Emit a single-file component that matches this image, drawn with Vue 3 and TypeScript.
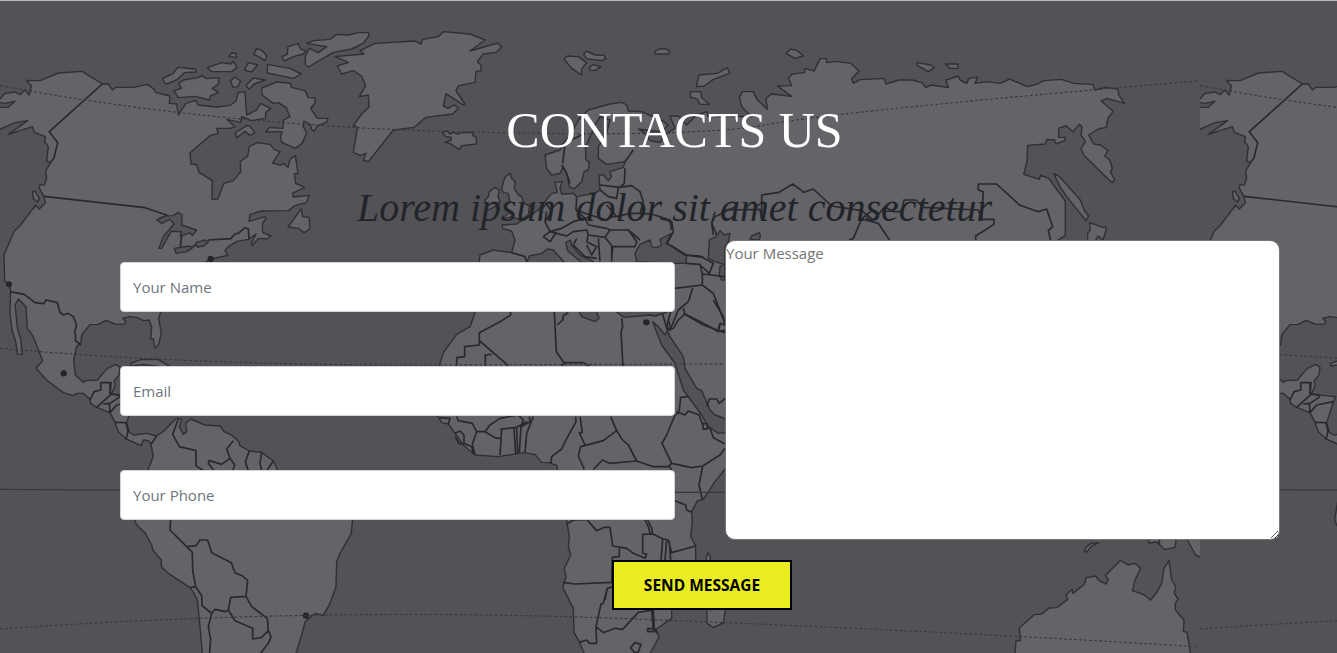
<script setup lang="ts">
import { reactive } from 'vue'

interface Shape { x?: number; y?: number; d: string }

const form = reactive({ name: '', email: '', phone: '', message: '' })
const fields: { key: 'name' | 'email' | 'phone'; label: string }[] = [
  { key: 'name', label: 'Your Name' },
  { key: 'email', label: 'Email' },
  { key: 'phone', label: 'Your Phone' },
]

// Map units are a third of a pixel; one map tile is 3600 units wide.
const americaLand: Shape[] = [
  { d: 'M-20 297L0 297 15 280 45 276 60 284 75 270 88 285 94 258 80 241 120 242 175 219 247 214 307 252 325 252 338 270 347 262 400 262 443 253 462 268 466 277 510 288 508 310 530 312 535 345 558 310 588 301 594 315 650 321 690 316 708 303 715 277 735 275 740 345 770 330 782 310 812 326 797 337 797 355 755 362 725 350 722 367 680 358 705 380 690 385 650 385 655 400 630 407 570 458 573 492 590 494 598 518 637 542 636 598 653 598 672 550 700 542 722 515 721 485 743 468 748 440 772 428 810 433 822 448 840 455 818 489 842 496 850 490 864 502 870 478 886 467 894 520 883 522 887 550 914 562 877 580 880 591 928 586 920 607 885 617 865 632 785 633 750 643 747 664 795 650 798 655 787 672 788 698 813 708 800 717 775 715 757 736 755 728 768 702 745 718 710 724 685 740 675 752 683 766 632 777 560 820 490 910 476 955 484 1000 475 1035 465 1045 460 1017 452 1017 455 980 447 960 430 962 412 953 390 950 368 955 378 965 372 973 345 972 318 961 295 973 270 974 245 1005 243 1025 230 1040 221 1080 226 1125 250 1147 257 1142 292 1140 322 1105 348 1093 360 1102 357 1125 343 1142 345 1160 333 1183 407 1190 400 1205 380 1268 387 1295 400 1305 440 1300 470 1308 495 1290 515 1268 530 1255 545 1257 538 1280 550 1303 560 1295 557 1270 572 1257 615 1275 660 1278 672 1295 695 1305 715 1323 720 1337 748 1353 785 1357 820 1383 833 1410 900 1450 1050 1520 1058 1550 1054 1600 1020 1660 1010 1685 1008 1760 990 1810 970 1846 945 1840 915 1866 905 1905 885 1970H608L600 1880 592 1800 582 1780 570 1763 505 1720 484 1700 484 1680 458 1650 455 1635 435 1598 410 1575 404 1560 420 1460 445 1408 460 1368 452 1330 445 1322 430 1320 423 1337 378 1317 355 1295 344 1265 330 1238 290 1222 272 1210 270 1198 250 1180 230 1180 220 1187 190 1178 140 1140 108 1105 128 1082 100 1010 82 985 78 920 55 897 45 915 53 990 62 1015 67 1063 53 1063 47 1025 36 990 30 940 32 870 27 853 14 843 12 765 43 693 62 675 107 615 118 627 136 608 132 590 118 565 120 553 133 556 140 535 137 512 152 488 140 483 145 440 134 425 136 410 103 397 97 380 25 403 83 362 45 368 0 388-20 388V322H25L45 304 15 310-20 305Z' },
  { d: 'M97 577L105 573 118 595 112 607 101 597ZM489 235L520 220 533 202 585 207 590 216 553 218 533 238 500 252 492 247ZM522 272L545 265 536 251 550 240 597 232 605 226 620 236 657 233 655 253 637 265 656 278 632 287 628 300 585 289 535 293ZM622 203L665 188 692 192 700 184 711 203 695 215H635ZM686 170L695 159 708 160 710 172ZM761 163L770 146 785 150 801 168 795 182 780 172ZM733 210L745 188 773 195 755 216ZM802 193L870 205 904 222 880 235 802 219ZM691 243L704 231 722 243 714 260 700 262ZM738 256L760 234 796 240 762 252 748 268ZM846 170L862 163 864 140 895 131 902 148 918 152 910 162 880 170 853 183ZM706 398L742 376 750 380 765 398 750 406 735 394 710 414ZM785 264L830 246 872 250 874 262 915 272 925 293 946 294 945 310 932 325 952 355 984 355 980 367 951 378 944 393 934 388 932 374 912 363 909 378 920 400 906 430 886 445 845 427 841 410 847 395 797 396 808 382 848 385 851 360 870 350 858 322 835 308 820 310 786 285Z' },
  { d: 'M916 195V168L928 145 955 158 980 140 920 130 940 122 990 118 1010 103 1045 105 1075 98H1105L1107 107 1090 130 1055 147 1000 157 925 201ZM864 681L904 626 908 650 928 652 929 688 912 698 895 685ZM392 1090L425 1078 475 1079 515 1102 550 1125 430 1135 480 1100 430 1093 392 1098Z' },
  { d: 'M1005 170L1045 187 1012 198 1025 222 1060 212 1085 228 1097 257 1078 290 1105 285 1107 322 1085 342 1060 376 1072 382 1060 457 1080 466 1098 460 1090 480 1105 485 1180 390 1243 382 1278 352 1358 342 1376 325 1362 315 1345 325 1330 318 1338 281 1390 315 1395 312 1368 273 1375 257 1425 247 1428 214 1443 212 1443 195 1432 185 1450 162 1488 157 1505 142 1493 129 1410 153 1455 120 1410 102 1330 95 1315 110 1268 118 1263 132 1245 123 1125 130 1080 152 1092 162Z' },
]

const lakes: Shape[] = [
  { d: 'M470 660L495 648 520 647 535 637 546 645 545 675 590 690 577 707 570 698 540 710 545 695 513 694 485 745 477 745 490 710 522 672 510 658 485 670ZM523 745L568 738 578 743 560 755 528 760ZM587 728L615 720 625 725 612 738 592 741Z' },
]

const americaBorders = 'M307 252L148 395 173 428 162 474 152 486M132 589L435 623 502 646M545 710L541 740M578 740L588 734M625 720L692 716 705 702 715 700 735 683 745 687 747 718M30 875L73 883 105 908 132 911 138 900 172 908 180 937 190 945 205 940 220 950 230 975 224 996 227 1010 226 1022 243 1035M270 1200L282 1175 303 1170 302 1148 330 1148 330 1180 360 1187M333 1146L330 1183M333 1183L290 1222M310 1212L328 1210 330 1238M330 1210L360 1190M330 1238L350 1215 400 1205M344 1267L378 1268 384 1295 378 1317M470 1308L453 1333M535 1257L518 1303 538 1340 588 1352 588 1397 610 1412M700 1322L680 1347 690 1375 665 1393 628 1382 625 1390 645 1415M690 1375L704 1395 698 1412M748 1353L736 1385 745 1412M785 1357L780 1390 785 1412M820 1383L800 1412M512 1558L510 1590 560 1640 577 1657 578 1710 587 1760 605 1787 606 1817 635 1840 645 1828 675 1835 685 1830 692 1792 738 1789 743 1742 728 1728 705 1718 694 1688 635 1658 623 1620H600L588 1637 560 1640M570 1763L587 1760M635 1840L625 1880 632 1918 628 1965M685 1830L705 1862 758 1885 758 1917 785 1912 805 1892 802 1855 755 1820 738 1789M805 1892L813 1910 805 1930 780 1962'

const euroLand: Shape[] = [
  { d: 'M1635 465L1680 450 1690 430 1715 400 1735 360 1765 330 1830 312 1865 307 1880 315 1885 333 1925 335 1985 362 2005 375 1985 395 1915 387 1935 400 1950 422 1980 428 2000 400 2025 385 2010 348 2035 348 2060 375 2090 345 2120 335 2125 350 2255 350 2225 320 2218 293 2227 275H2260L2270 297 2302 328 2298 295 2315 282 2375 289 2332 258 2375 257 2365 235 2375 223 2413 217 2415 205 2443 213 2460 176H2480V188L2505 184 2552 190 2577 213 2555 237 2560 250 2580 239 2652 235 2658 252 2697 240H2737L2765 248 2777 262 2795 255 2845 263 2838 240 2875 228 2880 240 2900 250 2907 235 2933 232 2925 250 2960 245 3000 250 3029 237 3081 260 3113 252 3131 242 3184 238 3221 250 3278 253 3284 270 3316 262 3354 267 3356 285 3374 310 3321 295 3304 303 3339 334 3324 355 3318 383 3299 385 3266 405 3281 432 3301 435 3324 452 3314 468 3329 480 3337 505 3331 515 3344 540 3336 548 3253 467 3243 447 3256 425 3243 405 3246 380 3238 373 3219 395 3198 377 3176 385V412H3196L3194 422 3168 432 3164 420 3141 418 3136 432 3083 436 3081 485 3071 523 3118 538 3121 525 3146 535 3196 603V707L3171 722 3000 1000 2700 1200 2300 1350 2175 1407 2145 1445 2110 1498 2092 1503 2075 1535 2077 1565 2072 1610 2087 1637V1690L2015 1825V1855L1965 1890 1978 1910 1945 1970H1757L1738 1925 1722 1897 1720 1825 1688 1762 1698 1730 1693 1705 1712 1665 1705 1640 1708 1610 1700 1560 1680 1480 1671 1397 1648 1388 1625 1387 1605 1363 1570 1358 1495 1370 1425 1365 1390 1335 1345 1272 1325 1268 1315 1250 1300 1150 1318 1097 1330 1058 1370 1003 1410 980 1425 938 1450 850 1437 787 1440 765 1480 750 1535 758 1545 720 1535 693 1507 685V675L1550 672 1570 658 1615 630 1635 605 1655 580 1672 578 1665 547 1687 545 1680 565 1685 582 1720 580 1730 590 1785 580 1800 570 1797 525 1810 525 1825 542 1835 530 1830 515 1870 502 1875 485 1820 493 1795 475V440L1820 400 1830 360 1800 350 1785 375 1770 410 1757 440 1757 478 1768 487 1765 510 1752 515 1745 545 1722 567 1708 560 1700 520 1690 500 1680 520 1655 525 1640 505Z' },
  { d: 'M1327 397L1342 393 1350 402 1362 397 1372 402 1390 398 1420 397 1418 407 1429 412V432L1385 437 1378 449 1350 430 1335 427 1354 420V412L1338 410ZM1692 177L1703 168 1735 170 1760 188 1745 207V225L1715 205ZM1751 163L1760 153 1785 165 1812 166 1818 176 1805 182 1760 176ZM1768 203L1778 194 1803 200 1785 211H1770ZM1964 155L1980 146 2000 147 2009 154 2006 162H1965ZM2097 225L2152 220 2182 203 2189 220 2140 238 2113 258 2089 260ZM2071 275H2103L2105 293 2128 313H2100L2092 298 2071 291ZM2359 160L2371 147 2392 152 2410 168 2384 175ZM2751 188L2792 195 2803 203 2785 215 2752 196ZM2837 192H2874V205H2850Z' },
  { d: 'M3161 520L3179 530 3241 600 3252 630 3266 648 3258 662 3200 590 3180 560ZM3269 668L3311 683 3318 680 3318 690 3309 720 3294 708 3286 722H3263V700L3271 690ZM1455 600L1465 590 1468 575 1485 562 1498 570 1494 590 1500 605 1485 620 1460 632 1458 612ZM1505 570L1510 545 1517 530 1530 520 1535 535 1545 545 1543 565 1555 585 1565 590 1572 610 1588 618 1585 645 1560 660 1535 650 1505 658 1530 635 1515 620 1530 607 1525 580 1512 578Z' },
  { d: 'M2118 1700V1675L2124 1658 2131 1670V1830L2180 1800 2170 1870 2162 1872 2140 1883 2121 1870 2120 1700Z' },
  { x: 3000, y: 1560, d: 'M45 402L48 362 61 362 58 323 105 283 123 283 148 264 170 263 203 238 198 225 216 208 219 220 254 192 258 173 287 168 297 182 319 192 325 178 316 167 361 121 384 135 404 130 422 145 405 180 397 212 430 223 452 240 470 218 485 190 492 145 507 122 515 180 527 200 523 220 534 237 526 250 526 270 552 300 550 334 561 337 573 410ZM253 94L256 85 272 70 297 68 275 78 260 96ZM446 50V69L470 66 495 89 525 82 530 45ZM550 45L562 60 587 105 610 115V50Z' },
]

const seas: Shape[] = [
  { d: 'M1575 800L1588 768 1625 760 1642 747 1660 750 1705 800ZM1790 800L1780 785 1740 765 1715 735 1712 720 1697 728 1703 752 1750 792ZM1905 760L1920 733 1950 720 1955 740 1970 743 1985 735 1980 718 2015 700 1998 730 2020 740 2060 765 2058 790 2025 790 1910 785Z' },
  { d: 'M2125 775L2128 720 2150 708 2160 692 2172 705 2190 700 2185 725 2175 740V840H2165L2158 825 2160 800 2170 793 2145 785ZM2250 718L2255 708 2278 698 2281 706 2278 720ZM1735 930L1745 950 1785 965 1797 955 1788 930ZM1835 925L1872 952 1950 945 1965 948 2000 937V925Z' },
  { x: 1260, y: 900, d: 'M698 65L715 80 735 105 742 92 750 110 790 170 795 205 830 265 845 272 870 330 885 345 925 360V397L895 400 865 380 845 345 790 270 765 190 725 135Z' },
]

const euroBorders: Shape[] = [
  { x: 1410, y: 450, d: 'M275 45L290 70 300 100M345 -50L285 -20 278 40M465 35L490 0M465 55L463 100 450 112 390 105M390 120L415 140 440 145 445 112 485 107 510 125 520 155 510 190 545 192 600 210 605 240M410 165L440 200 480 190 510 190M320 140L318 180 345 205 310 215 275 235 240 245 225 215 230 185M225 155L245 185 225 215M318 180L360 195 410 210 425 200 440 200M345 205L355 225 410 235 420 240 405 262 355 255 350 240 310 245 290 258 240 245M405 262L428 290 425 330M355 255L350 275 380 290 365 315 350 285M415 240L475 240 500 275 495 290 430 290M475 240L510 270M425 290L425 335M385 265L390 335M260 245L240 275 220 260 240 245M320 265L310 285 345 320 380 325M125 308L165 320 170 335M190 195L180 160M210 180L215 205M648 340L690 343 697 372 697 405 615 415M697 372L765 380M650 315L690 318 730 340 718 370 690 345M697 405L730 430 765 520M668 415L655 455 625 480 600 540 590 530 602 485M640 490L700 525 765 548M750 520L745 545 765 540M735 185L725 220 730 255M800 170L755 185' },
  { x: 1980, d: 'M155 670L165 650 205 630 300 628 305 660V585L357 577 398 552 432 577 460 567 515 618 605 632 640 660 675 620 700 635 725 635 732 600H767L790 622 955 630 965 660 970 575 955 570V552H1010L1080 616 1135 635 1160 627 1178 680 1165 692 1172 722M640 628L605 657 580 715 565 722M605 657L655 670 690 722M960 658H1002V673L947 708V722M155 670L170 705M0 655L35 665 40 695 22 730 75 765 130 772' },
  { x: 1260, y: 900, d: 'M272 35V45L240 65 178 98V135L134 140V170L110 173V200M178 122L265 197M196 200V165L215 163M403 35L409 155 432 188 490 188 510 200M412 75L428 60 430 47 445 38M605 55L608 80 603 97 609 200M425 197L432 188M727 40L742 90 752 88 745 60M790 25L795 42 775 60 760 85 745 90M795 42L860 75 890 92 915 96M880 0L910 50 915 75 900 70 895 88M860 320L868 297 890 297 898 310 915 295M803 290L782 292 778 330 768 345M770 335L795 345 805 333 838 345 848 375M848 370L860 372 865 385 850 388ZM765 345L740 405 726 430 755 490 815 503 848 498 900 465 915 445M870 385L880 413 915 432M848 498L837 555 847 598M755 490L745 500 700 500 650 483 568 490 548 480 520 508M748 500L755 510M572 350L590 392 605 417 625 435 650 483M590 392L550 422 482 440 475 468 493 508M480 350L487 398 478 398 495 435M467 350L468 365 435 425 425 447 395 470 393 490M340 350L320 400 315 457M328 350L330 365 303 380 298 457M290 385L293 462M282 385L287 462M245 388L240 465M240 388L290 382 320 365M195 395L210 375 240 355 295 345 310 360 303 380M195 395L225 413 242 416M110 350L115 362 157 370 170 395 195 395M170 395L157 433 165 465M105 400L120 393 132 405V430L118 432 105 410M132 430L155 440 160 460M85 372L90 355 60 353M440 672L460 660 500 658 530 692 553 682H570L578 738 620 745 640 760 675 775 680 762 668 760V703L698 702 730 717 745 720 755 758 827 738M675 660L685 680 690 700 698 702 695 685 683 660M765 602L797 615 800 630 815 637M728 718L723 780M740 720L735 780M748 725L752 780M598 745V770L577 772 575 847 465 852 430 847M555 900L562 865 578 860M562 865L550 910 543 912 528 980 550 998 585 985 608 988 655 937 700 930 703 995H683V985L705 987 712 998M528 980L530 1030H508L500 1020 478 1027M632 1043L645 1028 663 1033 655 1057H642ZM695 930L700 990' },
  { x: 3000, y: 1560, d: 'M478 55V75' },
]
</script>

<template>
  <section class="contact">
    <svg class="map" viewBox="0 0 4011 1959" aria-hidden="true">
      <defs>
        <clipPath id="tile"><rect width="3600" height="1959" /></clipPath>
        <g id="americas">
          <path v-for="(s, i) in americaLand" :key="'a' + i" class="land" :d="s.d" />
          <path v-for="(s, i) in lakes" :key="'l' + i" class="sea" :d="s.d" />
          <path class="border" :d="americaBorders" />
          <circle cx="27" cy="853" r="9" />
          <circle cx="632" cy="777" r="9.5" />
          <circle cx="191" cy="1120" r="9.5" />
          <circle cx="918" cy="1847" r="9.5" />
        </g>
        <g id="lines">
          <path class="dash" d="M0 257Q640 376 1365 395T2300 374T3590 243M0 1045Q600 1098 1330 1095T2800 1089T3600 1060M0 1887Q950 1820 1880 1856T3590 1940" />
          <path class="equator" d="M0 1468L1200 1475 2100 1477 3600 1470" />
        </g>
      </defs>
      <g clip-path="url(#tile)">
        <use href="#americas" />
        <g v-for="(s, i) in euroLand" :key="'e' + i" :transform="`translate(${s.x ?? 0} ${s.y ?? 0})`">
          <path class="land" :d="s.d" />
        </g>
        <g v-for="(s, i) in seas" :key="'s' + i" :transform="`translate(${s.x ?? 0} ${s.y ?? 0})`">
          <path class="sea" :d="s.d" />
        </g>
        <g v-for="(s, i) in euroBorders" :key="'b' + i" :transform="`translate(${s.x ?? 0} ${s.y ?? 0})`">
          <path class="border" :d="s.d" />
        </g>
        <circle cx="1939" cy="967" r="9.5" />
        <use href="#lines" />
      </g>
      <svg x="3600" width="411" height="1959" viewBox="0 0 411 1959">
        <use href="#americas" />
        <use href="#lines" />
      </svg>
    </svg>

    <h2 class="title">CONTACTS US</h2>
    <p class="subtitle">Lorem ipsum dolor sit amet consectetur</p>
    <form class="form" @submit.prevent>
      <div class="columns">
        <div class="fields">
          <input v-for="f in fields" :key="f.key" v-model="form[f.key]" class="field" type="text" :placeholder="f.label" />
        </div>
        <textarea v-model="form.message" class="message" placeholder="Your Message"></textarea>
      </div>
      <button class="send" type="submit">SEND MESSAGE</button>
    </form>
  </section>
</template>

<style>
body {
  margin: 0;
  overflow: hidden;
}
</style>

<style scoped>
.contact {
  position: relative;
  box-sizing: border-box;
  width: 100%;
  height: 653px;
  overflow: hidden;
  border-top: 1px solid #b6b9bb;
  background: #535257;
  font-family: 'Segoe UI', 'Open Sans', 'Noto Sans', sans-serif;
}
.map {
  position: absolute;
  top: -1px;
  left: 0;
  width: 1337px;
  height: 653px;
}
.land,
.sea {
  fill: #646368;
  stroke: #302f35;
  stroke-width: 4.2;
  stroke-linejoin: round;
}
.sea {
  fill: #535257;
}
.border {
  fill: none;
  stroke: #29282e;
  stroke-width: 5;
  stroke-linejoin: round;
}
.dash,
.equator {
  fill: none;
  stroke: #38373c;
  stroke-width: 3.4;
}
.dash {
  stroke-dasharray: 8 7;
}
circle {
  fill: #25242a;
}
.title,
.subtitle {
  position: relative;
  margin: 0;
  padding-left: 12px;
  text-align: center;
  font-family: 'Liberation Serif', 'Times New Roman', serif;
  font-weight: 400;
  white-space: nowrap;
}
.title {
  padding-top: 99px;
  color: #fff;
  font-size: 50px;
  line-height: 60px;
}
.subtitle {
  margin-top: 24px;
  color: #212529;
  font-size: 40px;
  font-style: italic;
  line-height: 48px;
}
.form {
  position: relative;
  display: flex;
  flex-direction: column;
  align-items: flex-start;
  margin-top: 8px;
  padding-left: 120px;
}
.columns {
  display: flex;
  gap: 50px;
  height: 300px;
}
.fields {
  display: flex;
  flex-direction: column;
  gap: 54px;
  padding-top: 22px;
}
.field {
  box-sizing: border-box;
  width: 555px;
  height: 50px;
  padding: 6px 12px;
  border: 1px solid #ced4da;
  border-radius: 4px;
  background: #fff;
  font: inherit;
  font-size: 15px;
}
.field::placeholder {
  color: #6c757d;
  opacity: 1;
}
.message {
  box-sizing: border-box;
  width: 554.5px;
  height: 300px;
  padding: 0;
  border: 1px solid #767676;
  border-radius: 10px;
  background: #fff;
  font: inherit;
  font-size: 15px;
  line-height: 25px;
}
.message::placeholder {
  color: #757575;
}
.send {
  box-sizing: border-box;
  width: 180px;
  height: 50px;
  margin: 20px 0 0 492px;
  padding: 0;
  border: 2px solid #000;
  background: #eaec22;
  color: #000;
  font: inherit;
  font-size: 15.5px;
  font-weight: 700;
}
</style>
